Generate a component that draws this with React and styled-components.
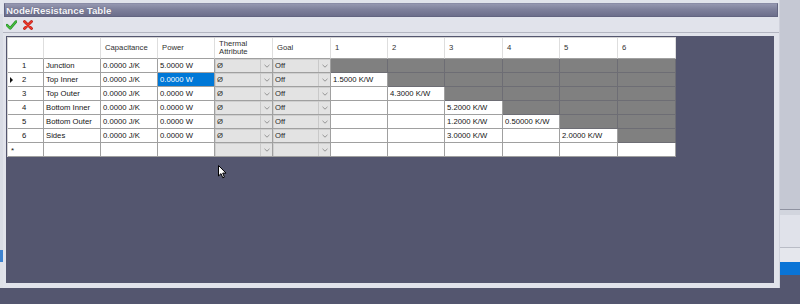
import styled, { createGlobalStyle } from "styled-components";

const GlobalStyle = createGlobalStyle`
  html, body {
    margin: 0;
    padding: 0;
  }
  body {
    background: #54566f;
    font-family: "Liberation Sans", Arial, sans-serif;
  }
`;

const columns = [
  { w: 36 },
  { w: 57, label: "" },
  { w: 57, label: "Capacitance" },
  { w: 57, label: "Power" },
  { w: 58, label: "Thermal Attribute" },
  { w: 58, label: "Goal" },
  { w: 57, label: "1" },
  { w: 57, label: "2" },
  { w: 58, label: "3" },
  { w: 57, label: "4" },
  { w: 58, label: "5" },
  { w: 58, label: "6" },
];

const nodes = [
  { id: 1, name: "Junction", cap: "0.0000 J/K", power: "5.0000 W", res: {} },
  { id: 2, name: "Top Inner", cap: "0.0000 J/K", power: "0.0000 W", res: { 1: "1.5000 K/W" }, current: true },
  { id: 3, name: "Top Outer", cap: "0.0000 J/K", power: "0.0000 W", res: { 2: "4.3000 K/W" } },
  { id: 4, name: "Bottom Inner", cap: "0.0000 J/K", power: "0.0000 W", res: { 3: "5.2000 K/W" } },
  { id: 5, name: "Bottom Outer", cap: "0.0000 J/K", power: "0.0000 W", res: { 3: "1.2000 K/W", 4: "0.50000 K/W" } },
  { id: 6, name: "Sides", cap: "0.0000 J/K", power: "0.0000 W", res: { 3: "3.0000 K/W", 5: "2.0000 K/W" } },
];

// strips of the windows lying behind the dialog
const rightBands = [
  [209, "#c5c8d3"],
  [1, "#8f92a0"],
  [5, "#d2d5de"],
  [32, "#e0e2ea"],
  [1, "#b9bcc6"],
  [14, "#e5e7ed"],
  [13, "#0a74d6"],
];

const leftBands = [
  [14, "#e4e6ed"],
  [236, "#d9dce5"],
  [12, "#3d82cf"],
  [26, "#dfe1e8"],
];

function CheckIcon() {
  return (
    <svg width="11" height="10" viewBox="0 0 11 10">
      <path d="M1 5.2 L4.2 8.4 L10 1.6" fill="none" stroke="#1f8a25" strokeWidth="2.6" strokeLinecap="round" strokeLinejoin="round" />
      <path d="M1 5.2 L4.2 8.4 L10 1.6" fill="none" stroke="#4cc23f" strokeWidth="1.3" strokeLinecap="round" strokeLinejoin="round" />
    </svg>
  );
}

function CancelIcon() {
  return (
    <svg width="10" height="10" viewBox="0 0 10 10">
      <path d="M1.5 1.5 L8.5 8.5 M8.5 1.5 L1.5 8.5" stroke="#b81b14" strokeWidth="2.8" strokeLinecap="round" />
      <path d="M1.5 1.5 L8.5 8.5 M8.5 1.5 L1.5 8.5" stroke="#ec3a2b" strokeWidth="1.5" strokeLinecap="round" />
    </svg>
  );
}

function Chevron() {
  return (
    <svg width="6" height="4" viewBox="0 0 6 4">
      <path d="M0.5 0.8 L3 3.2 L5.5 0.8" fill="none" stroke="#8c8c8c" strokeWidth="0.9" />
    </svg>
  );
}

function Combo({ value }) {
  return (
    <ComboCell>
      <ComboValue>{value}</ComboValue>
      <ComboButton>
        <Chevron />
      </ComboButton>
    </ComboCell>
  );
}

function Row({ node }) {
  return (
    <>
      <RowHeader>
        <Indicator>{node.current && <Arrow />}</Indicator>
        {node.id}
      </RowHeader>
      <Cell>{node.name}</Cell>
      <Cell>{node.cap}</Cell>
      <Cell $selected={node.current}>{node.power}</Cell>
      <Combo value="Ø" />
      <Combo value="Off" />
      {[1, 2, 3, 4, 5, 6].map((c) => (
        <Cell key={c} $blocked={c >= node.id}>
          {node.res[c] || ""}
        </Cell>
      ))}
    </>
  );
}

function App() {
  return (
    <>
      <GlobalStyle />
      <Screen>
        <Edge $w={3}>
          {leftBands.map(([h, bg], i) => (
            <Band key={i} $h={h} $bg={bg} />
          ))}
        </Edge>
        <WindowColumn>
          <Window>
            <TitleBar>Node/Resistance Table</TitleBar>
            <Toolbar>
              <ToolButton>
                <CheckIcon />
              </ToolButton>
              <ToolButton>
                <CancelIcon />
              </ToolButton>
            </Toolbar>
            <Separator />
            <GridPanel>
              <Grid $cols={columns.map((c) => `${c.w}px`).join(" ")}>
                <HeaderCell />
                {columns.slice(1).map((c, i) => (
                  <HeaderCell key={i}>{c.label}</HeaderCell>
                ))}

                {nodes.map((n) => (
                  <Row key={n.id} node={n} />
                ))}

                <RowHeader>
                  <Indicator>
                    <NewMark>*</NewMark>
                  </Indicator>
                </RowHeader>
                <Cell />
                <Cell />
                <Cell />
                <Combo value="" />
                <Combo value="" />
                {[1, 2, 3, 4, 5, 6].map((c) => (
                  <Cell key={c} />
                ))}
              </Grid>
              <Cursor width="9" height="14" viewBox="0 0 9 14">
                <path d="M0.5 0.5 L0.5 11 L3 8.6 L4.8 12.8 L6.4 12.1 L4.7 8.1 L8 8.1 Z" fill="#fff" stroke="#000" strokeWidth="1" strokeLinejoin="round" />
              </Cursor>
            </GridPanel>
          </Window>
        </WindowColumn>
        <Edge $w={20}>
          {rightBands.map(([h, bg], i) => (
            <Band key={i} $h={h} $bg={bg} />
          ))}
        </Edge>
      </Screen>
    </>
  );
}

const Screen = styled.div`
  width: 800px;
  height: 304px;
  display: flex;
  overflow: hidden;
  background: #54566f;
`;

const Edge = styled.div`
  width: ${(p) => p.$w}px;
  flex-shrink: 0;
  display: flex;
  flex-direction: column;
`;

const Band = styled.div`
  height: ${(p) => p.$h}px;
  flex-shrink: 0;
  background: ${(p) => p.$bg};
`;

const WindowColumn = styled.div`
  width: 777px;
  flex-shrink: 0;
  display: flex;
  flex-direction: column;
`;

const Window = styled.div`
  height: 288px;
  box-sizing: border-box;
  padding-top: 3px;
  display: flex;
  flex-direction: column;
  background: #e1e3eb;
  border-right: 1px solid #d0d2dc;
`;

const TitleBar = styled.div`
  height: 14px;
  box-sizing: border-box;
  margin: 0 1px;
  padding-left: 1px;
  display: flex;
  align-items: center;
  background: linear-gradient(to bottom, #9597b0 0%, #7e809b 45%, #6c6e8b 100%);
  border: 1px solid #626480;
  border-top-color: #8a8ca6;
  color: #f4f4f8;
  font-weight: bold;
  font-size: 9.7px;
  text-shadow: 0 0 1px rgba(60, 62, 90, 0.6);
`;

const Toolbar = styled.div`
  height: 15px;
  padding-left: 3px;
  display: flex;
  align-items: center;
  gap: 5px;
`;

const ToolButton = styled.span`
  width: 11px;
  height: 10px;
  display: flex;
  align-items: center;
  justify-content: center;
`;

const Separator = styled.div`
  height: 1px;
  background: #b3b5c1;
`;

const GridPanel = styled.div`
  position: relative;
  flex: 1;
  margin: 3px 5px 5px 3px;
  padding: 1px 0 0 1px;
  background: #54566f;
`;

const Grid = styled.div`
  display: grid;
  grid-template-columns: ${(p) => p.$cols};
  grid-template-rows: 21px;
  grid-auto-rows: 14px;
  width: max-content;
  border-top: 1px solid #d4d4d4;
  border-left: 1px solid #d4d4d4;
  background: #fff;
  font-size: 7.7px;
  color: #141414;
`;

const Cell = styled.div`
  box-sizing: border-box;
  padding: 0 2px;
  line-height: 13px;
  white-space: nowrap;
  overflow: hidden;
  border-right: 1px solid ${(p) => (p.$blocked ? "#6d6d74" : "#a0a0a0")};
  border-bottom: 1px solid ${(p) => (p.$blocked ? "#6d6d74" : "#a0a0a0")};
  background: ${(p) => (p.$blocked ? "#808080" : p.$selected ? "#0078d7" : "#fff")};
  color: ${(p) => (p.$selected ? "#fff" : "#141414")};
`;

const HeaderCell = styled.div`
  box-sizing: border-box;
  padding: 0 3px 0 4px;
  display: flex;
  align-items: center;
  line-height: 8px;
  color: #303030;
  border-right: 1px solid #dedede;
  border-bottom: 1px solid #a0a0a0;
`;

const RowHeader = styled(Cell)`
  display: flex;
  align-items: center;
  padding-left: 2px;
`;

const Indicator = styled.span`
  width: 12px;
  display: flex;
  align-items: center;
`;

const Arrow = styled.span`
  width: 0;
  height: 0;
  border-left: 3px solid #111;
  border-top: 3px solid transparent;
  border-bottom: 3px solid transparent;
`;

const NewMark = styled.span`
  font-size: 8px;
  line-height: 8px;
  padding-left: 1px;
  margin-top: 2px;
`;

const ComboCell = styled(Cell)`
  display: flex;
  padding: 0;
  background: #e3e3e3;
  box-shadow: inset 1px 1px 0 #cfcfcf;
`;

const ComboValue = styled.span`
  flex: 1;
  padding-left: 2px;
  color: #2a2a2a;
`;

const ComboButton = styled.span`
  width: 11px;
  display: flex;
  align-items: center;
  justify-content: center;
  border-left: 1px solid #c9c9c9;
`;

const Cursor = styled.svg`
  position: absolute;
  left: 212px;
  top: 129px;
`;

export default App;
